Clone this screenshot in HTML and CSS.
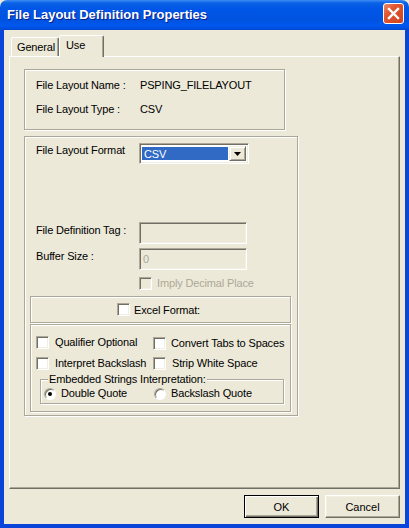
FILE: index.html
```html
<!DOCTYPE html>
<html lang="en">
<head>
    <meta charset="UTF-8">
    <meta name="viewport" content="width=device-width, initial-scale=1.0">
    <title>File Layout Definition Properties</title>
    <link rel="stylesheet" href="styles.css">
</head>
<body>

<div class="window">
    <div class="titlebar">
        <span class="title">File Layout Definition Properties</span>
        <button class="close-btn" aria-label="Close">
            <svg width="21" height="21" viewBox="0 0 21 21">
                <path d="M6 6 L15 15 M15 6 L6 15" stroke="#fff" stroke-width="2.4" stroke-linecap="square"/>
            </svg>
        </button>
    </div>

    <div class="client">
        <div class="tabs">
            <div class="tab tab-general">General</div>
            <div class="tab tab-use active">Use</div>
        </div>

        <div class="panel">
            <!-- nombre y tipo -->
            <div class="group info-group">
                <div class="info-row">
                    <span class="info-label">File Layout Name :</span>
                    <span>PSPING_FILELAYOUT</span>
                </div>
                <div class="info-row">
                    <span class="info-label">File Layout Type :</span>
                    <span>CSV</span>
                </div>
            </div>

            <div class="group format-group">
                <div class="field-row format-row">
                    <span class="field-label">File Layout Format</span>
                    <div class="select">
                        <span class="select-value">CSV</span>
                        <span class="select-arrow">
                            <svg width="7" height="4" viewBox="0 0 7 4"><path d="M0 0 H7 L3.5 4 Z" fill="#000"/></svg>
                        </span>
                    </div>
                </div>

                <div class="field-row tag-row">
                    <span class="field-label">File Definition Tag :</span>
                    <div class="text-input"></div>
                </div>
                <div class="field-row buffer-row">
                    <span class="field-label">Buffer Size :</span>
                    <div class="text-input">0</div>
                </div>
                <div class="field-row imply-row">
                    <span class="field-label"></span>
                    <span class="check disabled"></span>
                    <span class="disabled-text">Imply Decimal Place</span>
                </div>

                <div class="excel-box">
                    <span class="check"></span>
                    <span>Excel Format:</span>
                </div>

                <div class="options-box">
                    <div class="check-grid">
                        <div class="check-item"><span class="check"></span>Qualifier Optional</div>
                        <div class="check-item item-convert"><span class="check"></span>Convert Tabs to Spaces</div>
                        <div class="check-item"><span class="check"></span>Interpret Backslash</div>
                        <div class="check-item"><span class="check"></span>Strip White Space</div>
                    </div>
                    <fieldset class="embedded">
                        <legend>Embedded Strings Interpretation:</legend>
                        <div class="radio-row">
                            <div class="radio-item radio-first"><span class="radio checked"></span>Double Quote</div>
                            <div class="radio-item"><span class="radio"></span>Backslash Quote</div>
                        </div>
                    </fieldset>
                </div>
            </div>
        </div>

        <div class="buttons">
            <button class="btn btn-default">OK</button>
            <button class="btn">Cancel</button>
        </div>
    </div>
</div>

</body>
</html>
```

FILE: styles.css
```css
html, body {
    margin: 0;
    padding: 0;
    background-color: #ECE9D8;
}

body {
    font-family: "Liberation Sans", Arial, sans-serif;
    font-size: 11px;
    letter-spacing: -0.15px;
    color: #000;
}

.window {
    width: 409px;
    height: 528px;
    display: flex;
    flex-direction: column;
    box-sizing: border-box;
}

/* barra de titulo */
.titlebar {
    height: 30px;
    flex: none;
    display: flex;
    align-items: center;
    justify-content: space-between;
    padding: 0 5px 0 7px;
    box-sizing: border-box;
    background: linear-gradient(to bottom, #3D8CF4 0px, #0A62E6 3px, #0056E6 9px, #0053E0 20px, #0058EE 26px, #0047D0 30px);
    border-radius: 7px 7px 0 0;
}

.title {
    color: #fff;
    font-weight: bold;
    font-size: 13px;
    letter-spacing: 0;
    text-shadow: 1px 1px 0 #0A1E8A;
    padding-bottom: 1px;
}

.close-btn {
    width: 21px;
    height: 21px;
    padding: 0;
    margin-bottom: 3px;
    border: 1px solid #fff;
    border-radius: 3px;
    background: linear-gradient(135deg, #EC8A6C 0%, #E0562F 35%, #D2421F 100%);
    display: flex;
    align-items: center;
    justify-content: center;
    box-sizing: border-box;
}

.close-btn svg {
    display: block;
    margin: -1px;
}

.client {
    flex: 1;
    display: flex;
    flex-direction: column;
    border: 4px solid #0845D8;
    border-top: none;
    background-color: #ECE9D8;
    min-height: 0;
}

/* pestañas */
.tabs {
    height: 26px;
    flex: none;
    display: flex;
    align-items: flex-end;
    padding-left: 7px;
    box-sizing: border-box;
}

.tab {
    box-sizing: border-box;
    border: 1px solid;
    border-color: #fff #716F64 transparent #fff;
    border-bottom: none;
    box-shadow: inset -1px 0 0 #ACA899;
    border-radius: 2px 2px 0 0;
    background-color: #ECE9D8;
}

.tab-general {
    width: 48px;
    height: 19px;
    padding: 3px 0 0 5px;
}

.tab-use {
    width: 45px;
    height: 22px;
    padding: 3px 0 0 6px;
    margin-bottom: -1px;
    position: relative;
    z-index: 1;
}

.panel {
    flex: 1;
    margin: 0 5px;
    border: 1px solid;
    border-color: #fff #716F64 #716F64 #fff;
    box-shadow: inset -1px -1px 0 #ACA899;
    padding: 12px 0 0 14px;
    box-sizing: border-box;
}

/* cuadros de grupo con borde grabado */
.group, .excel-box, .options-box, .embedded {
    border: 1px solid #ACA899;
    box-shadow: inset 1px 1px 0 #fff, 1px 1px 0 #fff;
    box-sizing: border-box;
}

.info-group {
    width: 261px;
    height: 61px;
    padding: 9px 0 0 11px;
    display: flex;
    flex-direction: column;
    gap: 11px;
}

.info-row {
    display: flex;
    line-height: 13px;
}

.info-label {
    width: 104px;
}

.format-group {
    width: 274px;
    height: 280px;
    margin-top: 6px;
    padding: 6px 6px 0 5px;
}

.field-row {
    display: flex;
    align-items: flex-start;
    padding-left: 6px;
    line-height: 13px;
}

.field-label {
    width: 103px;
    flex: none;
    padding-top: 2px;
}

.format-row .field-label {
    padding-top: 1px;
}

.select {
    width: 110px;
    height: 21px;
    display: flex;
    padding: 2px;
    gap: 1px;
    box-sizing: border-box;
    background-color: #fff;
    border: 1px solid;
    border-color: #ACA899 #fff #fff #ACA899;
    box-shadow: inset 1px 1px 0 #716F64, inset -1px -1px 0 #F1EFE2;
}

.select-value {
    flex: 1;
    background-color: #316AC5;
    color: #fff;
    padding: 1px 0 0 2px;
    margin: 1px 0;
    line-height: 13px;
}

.select-arrow {
    width: 17px;
    flex: none;
    display: flex;
    align-items: center;
    justify-content: center;
    background-color: #ECE9D8;
    border: 1px solid;
    border-color: #F1EFE2 #716F64 #716F64 #F1EFE2;
    box-shadow: inset 1px 1px 0 #fff, inset -1px -1px 0 #ACA899;
    box-sizing: border-box;
}

.tag-row {
    margin-top: 58px;
}

.buffer-row {
    margin-top: 4px;
}

.text-input {
    width: 108px;
    height: 22px;
    box-sizing: border-box;
    border: 1px solid;
    border-color: #ACA899 #fff #fff #ACA899;
    box-shadow: inset 1px 1px 0 #716F64, inset -1px -1px 0 #F1EFE2;
    color: #ACA899;
    padding: 4px 0 0 3px;
}

.imply-row {
    margin-top: 7px;
    align-items: center;
}

.check {
    width: 13px;
    height: 13px;
    flex: none;
    box-sizing: border-box;
    background-color: #fff;
    border: 1px solid;
    border-color: #ACA899 #fff #fff #ACA899;
    box-shadow: inset 1px 1px 0 #716F64, inset -1px -1px 0 #F1EFE2;
}

.check.disabled {
    background-color: #ECE9D8;
}

.disabled-text {
    color: #ACA899;
    margin-left: 5px;
}

.excel-box {
    height: 27px;
    margin-top: 6px;
    display: flex;
    align-items: center;
    justify-content: center;
    gap: 4px;
    padding-right: 4px;
}

.options-box {
    height: 88px;
    margin-top: 1px;
    padding: 10px 6px 0 5px;
}

.check-grid {
    display: grid;
    grid-template-columns: 117px auto;
    row-gap: 7px;
}

.check-item {
    display: flex;
    align-items: center;
    gap: 6px;
    line-height: 13px;
    white-space: nowrap;
}

.item-convert {
    margin-top: 2px;
    gap: 5px;
}

.embedded {
    margin: 3px 0 0 4px;
    padding: 1px 3px 3px;
    min-width: 0;
}

.embedded legend {
    padding: 0 1px;
    margin-left: 4px;
    line-height: 13px;
    background-color: #ECE9D8;
}

.radio-row {
    display: flex;
    line-height: 13px;
}

.radio-item {
    display: flex;
    align-items: center;
    gap: 5px;
}

.radio-first {
    width: 110px;
}

.radio {
    width: 12px;
    height: 12px;
    border-radius: 50%;
    box-sizing: border-box;
    background-color: #fff;
    border: 1px solid;
    border-color: #ACA899 #fff #fff #ACA899;
    box-shadow: inset 1px 1px 0 #716F64;
    display: flex;
    align-items: center;
    justify-content: center;
}

.radio.checked::after {
    content: "";
    width: 4px;
    height: 4px;
    border-radius: 50%;
    background-color: #000;
}

/* botones */
.buttons {
    flex: none;
    display: flex;
    justify-content: flex-end;
    gap: 6px;
    padding: 6px 5px 6px 0;
}

.btn {
    width: 75px;
    height: 23px;
    font-family: "Liberation Sans", Arial, sans-serif;
    font-size: 11px;
    color: #000;
    background-color: #ECE9D8;
    border: 1px solid;
    border-color: #fff #716F64 #716F64 #fff;
    box-shadow: inset -1px -1px 0 #ACA899, inset 1px 1px 0 #F1EFE2;
    padding: 0;
}

.btn-default {
    border-color: #000;
    box-shadow: inset 1px 1px 0 #fff, inset -1px -1px 0 #716F64, inset -2px -2px 0 #ACA899;
}
```
